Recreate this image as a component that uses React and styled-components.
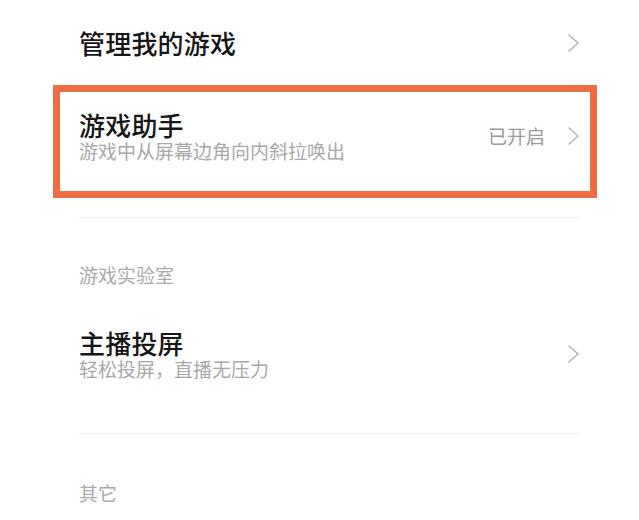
import React from 'react'
import styled, { createGlobalStyle, css } from 'styled-components'

const GlobalStyle = createGlobalStyle`
  html, body {
    margin: 0;
    padding: 0;
    background: #ffffff;
  }
  body {
    font-family: "Noto Sans CJK SC", "Noto Sans", sans-serif;
    -webkit-font-smoothing: antialiased;
  }
`

const Page = styled.div`
  width: 639px;
  height: 520px;
  overflow: hidden;
  background: #ffffff;
  box-sizing: border-box;
  padding: 0 59px 0 79px;
`

const Row = styled.div`
  display: flex;
  align-items: center;
  justify-content: space-between;
  box-sizing: border-box;
  height: ${p => p.height}px;
  ${p => p.highlighted && css`
    margin: 0 -17px 0 -26px;
    padding: 18px 10px 29px 19px;
    border: 7px solid #ee6d45;
  `}
`

const Texts = styled.div`
  display: flex;
  flex-direction: column;
`

const Title = styled.div`
  font-size: 26px;
  line-height: 30px;
  font-weight: 500;
  color: #161616;
  letter-spacing: 0.2px;
`

const Subtitle = styled.div`
  font-size: 19px;
  line-height: 22px;
  color: #a8a8a8;
`

const Trailing = styled.div`
  display: flex;
  align-items: center;
  gap: 22px;
`

const Status = styled.span`
  font-size: 19px;
  line-height: 22px;
  color: #999999;
`

const Divider = styled.div`
  height: 1px;
  background: #ececec;
  margin-top: ${p => p.top}px;
`

const SectionLabel = styled.div`
  font-size: 19px;
  line-height: 22px;
  color: #aaaaaa;
  margin-top: ${p => p.top}px;
`

const Spacer = styled.div`
  height: ${p => p.size}px;
`

const Chevron = () => (
  <svg width="13" height="20" viewBox="0 0 13 20" fill="none">
    <polyline
      points="1.5,1.5 11,10 1.5,18.5"
      stroke="#b5b5b5"
      strokeWidth="1.5"
      strokeLinejoin="miter"
    />
  </svg>
)

export default function App() {
  return (
    <>
      <GlobalStyle />
      <Page>
        <Row height={85}>
          <Title>管理我的游戏</Title>
          <Chevron />
        </Row>

        <Row height={113} highlighted>
          <Texts>
            <Title>游戏助手</Title>
            <Subtitle>游戏中从屏幕边角向内斜拉唤出</Subtitle>
          </Texts>
          <Trailing>
            <Status>已开启</Status>
            <Chevron />
          </Trailing>
        </Row>

        <Divider top={19} />
        <SectionLabel top={46}>游戏实验室</SectionLabel>

        <Spacer size={42} />
        <Row height={52}>
          <Texts>
            <Title>主播投屏</Title>
            <Subtitle>轻松投屏，直播无压力</Subtitle>
          </Texts>
          <Chevron />
        </Row>

        <Divider top={53} />
        <SectionLabel top={48}>其它</SectionLabel>
      </Page>
    </>
  )
}
